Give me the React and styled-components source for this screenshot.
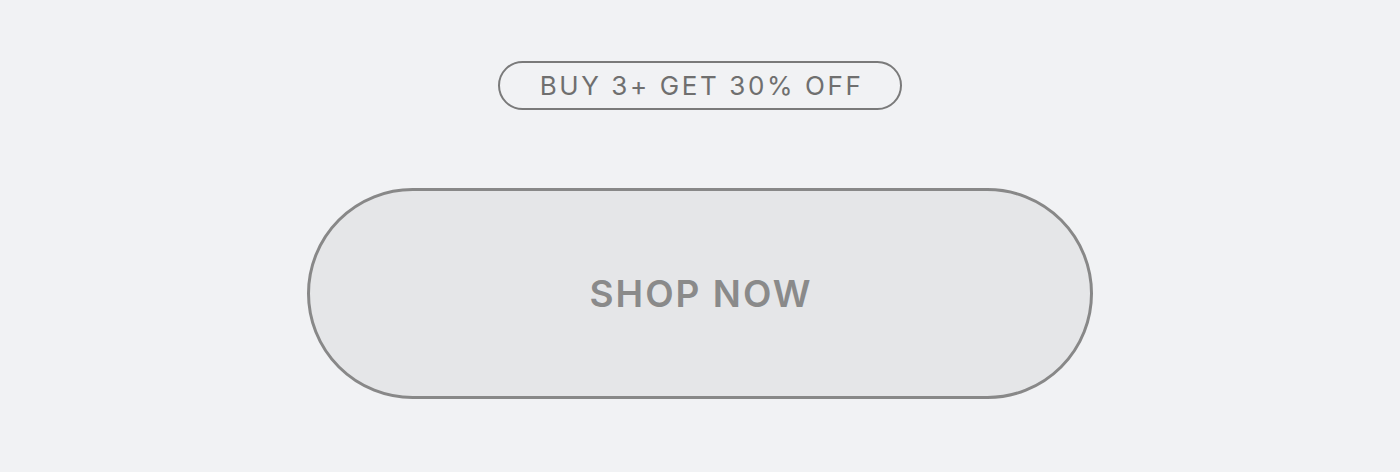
import React from "react";
import styled, { createGlobalStyle } from "styled-components";

const Global = createGlobalStyle`
  html, body { margin: 0; padding: 0; background: #f1f2f4; }
  body { font-family: Inter, "Liberation Sans", sans-serif; }
`;

const Page = styled.main`
  width: 1400px;
  height: 472px;
  box-sizing: border-box;
  padding-top: 61px;
  display: flex;
  flex-direction: column;
  align-items: center;
  gap: 78px;
`;

const Badge = styled.div`
  width: 404px;
  height: 49px;
  box-sizing: border-box;
  border: 2px solid #7a7a7a;
  border-radius: 25px;
  display: flex;
  align-items: center;
  justify-content: center;
  padding-left: 3px;
  color: #6f6f6f;
  font-size: 26px;
  font-weight: 400;
  letter-spacing: 2.6px;
`;

const ShopButton = styled.button`
  width: 786px;
  height: 211px;
  box-sizing: border-box;
  border: 3px solid #888888;
  border-radius: 106px;
  background: #e5e6e8;
  color: #8a8a8a;
  font-family: Inter, "Liberation Sans", sans-serif;
  font-size: 37px;
  font-weight: 600;
  letter-spacing: 2px;
  padding: 0 0 0 2px;
  cursor: pointer;
`;

export default function App() {
  return (
    <>
      <Global />
      <Page>
        <Badge>BUY 3+ GET 30% OFF</Badge>
        <ShopButton>SHOP NOW</ShopButton>
      </Page>
    </>
  );
}
